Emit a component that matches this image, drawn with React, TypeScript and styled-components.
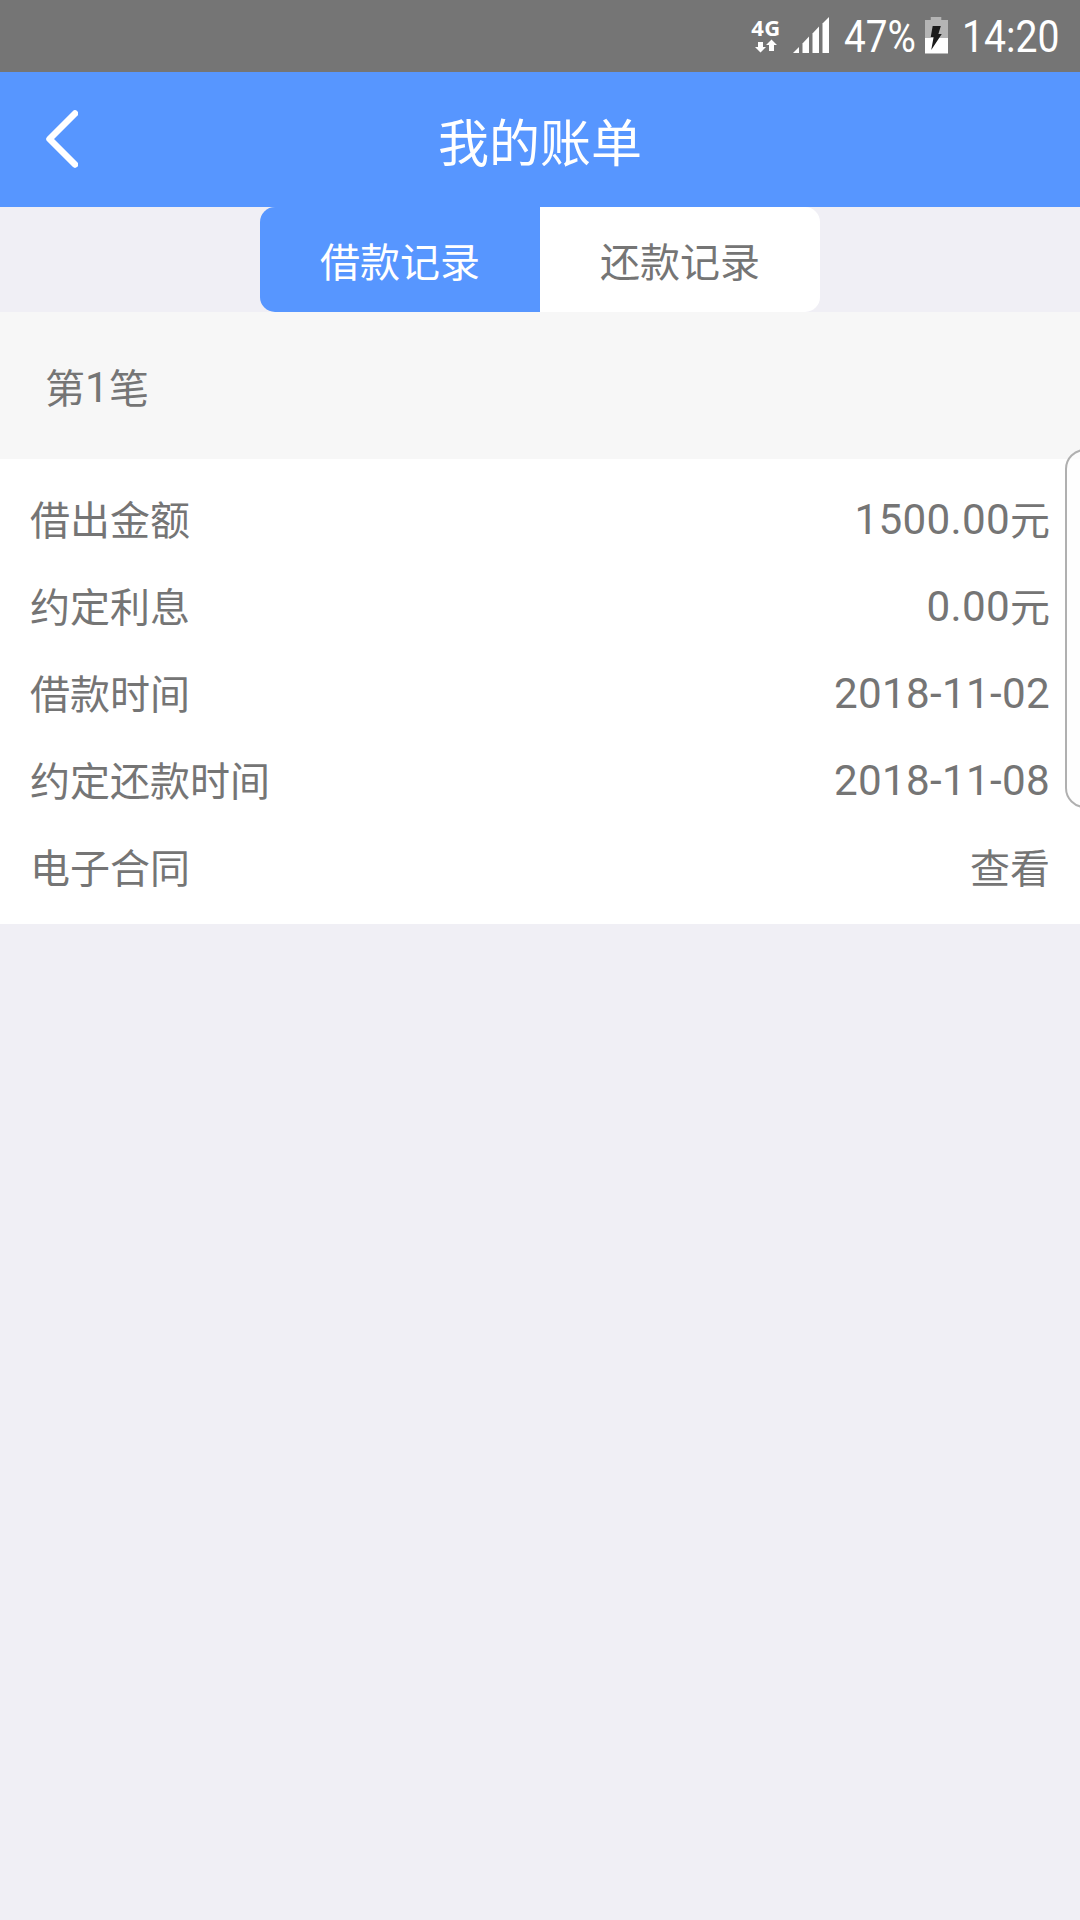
import React from "react";
import styled, { createGlobalStyle } from "styled-components";

const GlobalStyle = createGlobalStyle`
  *, *::before, *::after { box-sizing: border-box; }
  html, body { margin: 0; padding: 0; background: #f0eff5; }
  body { font-family: Roboto, "Noto Sans CJK SC", sans-serif; color: #757575; }
`;

const Screen = styled.div`
  position: relative;
  display: flex;
  flex-direction: column;
  width: 1080px;
  height: 1920px;
  overflow: hidden;
  background: #f0eff5;
`;

const StatusBar = styled.div`
  display: flex;
  align-items: flex-start;
  justify-content: flex-end;
  height: 72px;
  padding-right: 20px;
  background: #757575;
  color: #fff;
`;

const Network = styled.div`
  display: flex;
  flex-direction: column;
  align-items: center;
  width: 30px;
  padding-top: 15px;
  margin-right: 11px;
`;

const NetworkLabel = styled.span`
  font: 700 22px/24px "Noto Sans", sans-serif;
  letter-spacing: 0.5px;
`;

const DataArrows = styled.svg`
  display: block;
  width: 22px;
  height: 14px;
  margin: 0 1px 0 0;
`;

const SignalIcon = styled.svg`
  display: block;
  width: 37px;
  height: 36px;
  margin: 17px 15px 0 0;
`;

const BatteryIcon = styled.svg`
  display: block;
  width: 23px;
  height: 37px;
  margin: 17px 14px 0 0;
`;

const StatusText = styled.div<{ $width: number; $gap: number; $scale: number }>`
  display: flex;
  justify-content: flex-start;
  width: ${(p) => p.$width}px;
  margin-right: ${(p) => p.$gap}px;
  padding-top: 11px;
  font-size: 45px;
  line-height: 52px;
  white-space: nowrap;

  span {
    transform: scaleX(${(p) => p.$scale});
    transform-origin: left center;
  }
`;

const Header = styled.header`
  display: grid;
  grid-template-columns: 120px 1fr 120px;
  align-items: center;
  height: 135px;
  background: #5796ff;
  color: #fff;
`;

const BackButton = styled.button`
  display: flex;
  align-items: center;
  height: 135px;
  padding: 0 0 1px 46px;
  border: 0;
  background: none;
`;

const BackIcon = styled.svg`
  display: block;
  width: 32px;
  height: 58px;
`;

const Title = styled.h1`
  margin: 0;
  padding-top: 10px;
  text-align: center;
  font-size: 51px;
  line-height: 72px;
  font-weight: 400;
`;

const Tabs = styled.div`
  display: flex;
  width: 560px;
  height: 105px;
  margin: 0 auto;
  border-radius: 15px;
  overflow: hidden;
`;

const Tab = styled.button<{ $active?: boolean }>`
  flex: 1;
  padding: 9px 0 0;
  border: 0;
  background: ${(p) => (p.$active ? "#5796ff" : "#fff")};
  color: ${(p) => (p.$active ? "#fff" : "#757575")};
  font: 400 40px/60px Roboto, "Noto Sans CJK SC", sans-serif;
`;

const SectionTitle = styled.h2`
  height: 147px;
  margin: 0;
  padding: 48px 45px 0;
  background: #f7f7f7;
  font-size: 40px;
  line-height: 60px;
  font-weight: 400;
`;

const Details = styled.dl`
  display: flex;
  flex-direction: column;
  height: 465px;
  margin: 0;
  padding: 15px 30px;
  background: #fff;
`;

const Row = styled.div`
  display: flex;
  align-items: baseline;
  justify-content: space-between;
  height: 87px;
  padding-top: 18px;
  font-size: 40px;
  line-height: 60px;
`;

const Label = styled.dt`
  margin: 0;
`;

const Value = styled.dd`
  margin: 0;
`;

const Digits = styled.span`
  font-size: 42.2px;
  line-height: 1;
  letter-spacing: 0.3px;
  vertical-align: 1px;
`;

const EdgePanel = styled.div`
  position: absolute;
  top: 449px;
  right: -31px;
  width: 46px;
  height: 359px;
  border: 2px solid #b0b0b0;
  border-radius: 20px;
  background: rgba(253, 253, 253, 0.7);
`;

const rows = [
  { label: "借出金额", digits: "1500.00", text: "元" },
  { label: "约定利息", digits: "0.00", text: "元" },
  { label: "借款时间", digits: "2018-11-02", text: "" },
  { label: "约定还款时间", digits: "2018-11-08", text: "" },
  { label: "电子合同", digits: "", text: "查看" },
];

export default function App() {
  return (
    <Screen>
      <GlobalStyle />
      <StatusBar>
        <Network>
          <NetworkLabel>4G</NetworkLabel>
          <DataArrows viewBox="0 0 22 14" fill="#fff">
            <path d="M3 3h5v5h3l-5.500 5.500L0 8h3z" />
            <path d="M14 12h5V6h3L16.500 .5 11 6h3z" />
          </DataArrows>
        </Network>
        <SignalIcon viewBox="0 0 37 36" fill="#fff">
          <path d="M1 36l6-6V36z" />
          <path d="M10.500 26.500l6.500-7V36h-6.500z" />
          <path d="M20.500 16.500l6.500-7V36h-6.500z" />
          <path d="M30.500 6.500l6.500-6.500V36h-6.500z" />
        </SignalIcon>
        <StatusText $width={72} $gap={9} $scale={0.86}>
          <span>47%</span>
        </StatusText>
        <BatteryIcon viewBox="0 0 24 37" preserveAspectRatio="none">
          <path d="M0 3h6V0h11v3h7v18H0z" fill="#b4b4b4" />
          <path d="M0 21h24v15.500H0z" fill="#fff" />
          <path d="M8 9h8.500L14 17h3.500L6.500 33 9 20H6z" fill="#1b1b1b" />
        </BatteryIcon>
        <StatusText $width={98} $gap={0} $scale={0.87}>
          <span>14:20</span>
        </StatusText>
      </StatusBar>
      <Header>
        <BackButton aria-label="返回">
          <BackIcon viewBox="0 0 32 58" fill="none" stroke="#fff" strokeWidth="6.500" strokeLinecap="round" strokeLinejoin="round">
            <path d="M29 3.500L3.500 29 29 54.500" />
          </BackIcon>
        </BackButton>
        <Title>我的账单</Title>
      </Header>
      <Tabs>
        <Tab $active>借款记录</Tab>
        <Tab>还款记录</Tab>
      </Tabs>
      <SectionTitle>
        第<Digits>1</Digits>笔
      </SectionTitle>
      <Details>
        {rows.map((row) => (
          <Row key={row.label}>
            <Label>{row.label}</Label>
            <Value>
              {row.digits && <Digits>{row.digits}</Digits>}
              {row.text}
            </Value>
          </Row>
        ))}
      </Details>
      <EdgePanel />
    </Screen>
  );
}
